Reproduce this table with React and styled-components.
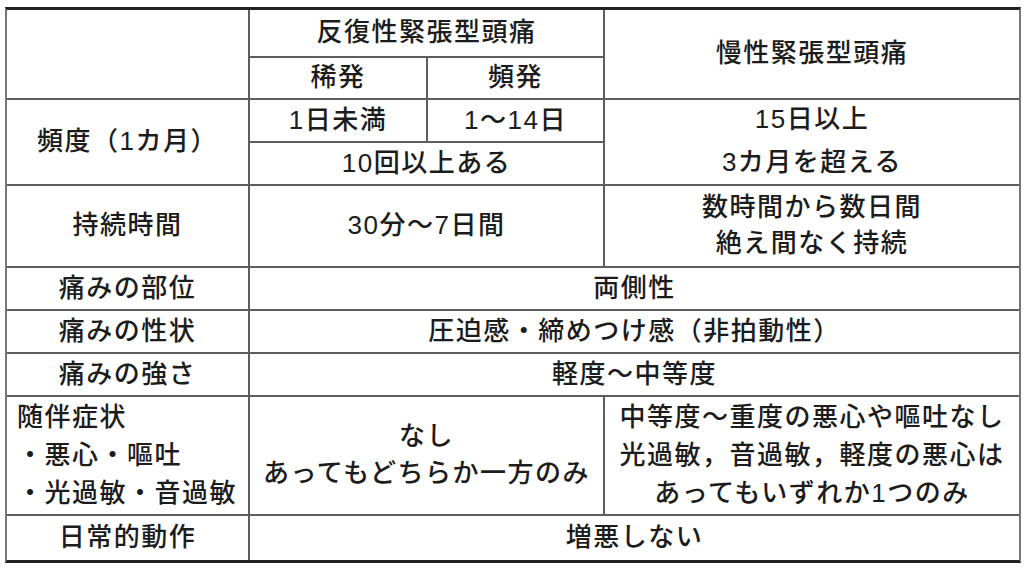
import React from "react";
import styled, { createGlobalStyle } from "styled-components";

const Global = createGlobalStyle`
  html, body { margin: 0; padding: 0; background: #ffffff; }
  body {
    font-family: "Liberation Sans", "Noto Sans CJK JP", sans-serif;
    color: #1c1c1c;
  }
`;

const Page = styled.div`
  padding: 7px 0 0 5px;
`;

const Table = styled.div`
  display: grid;
  width: 1016px;
  box-sizing: border-box;
  grid-template-columns: 241px 176px 175px 414px;
  grid-template-rows: 46px 40px 41px 41px 80px 41px 41px 41px 117px 44px;
  column-gap: 2px;
  row-gap: 2px;
  background: #5e5e5e;
  border-top: 3px solid #222;
  border-bottom: 3px solid #222;
  border-left: 2px solid #777;
  border-right: 2px solid #777;
`;

const Cell = styled.div`
  grid-column: ${(p) => p.$col};
  grid-row: ${(p) => p.$row};
  background: #ffffff;
  display: flex;
  flex-direction: column;
  justify-content: center;
  align-items: ${(p) => (p.$left ? "flex-start" : "center")};
  padding-left: ${(p) => (p.$left ? "10px" : "0")};
  padding-bottom: 2px;
  text-align: ${(p) => (p.$left ? "left" : "center")};
  font-size: 26px;
  font-weight: 500;
  letter-spacing: 1.5px;
  line-height: ${(p) => p.$lh || 36}px;
  white-space: nowrap;
`;

const Line = styled.span`
  display: block;
`;

export default function App() {
  return (
    <>
      <Global />
      <Page>
        <Table>
          <Cell $col="1" $row="1 / 3" />
          <Cell $col="2 / 4" $row="1">反復性緊張型頭痛</Cell>
          <Cell $col="4" $row="1 / 3">慢性緊張型頭痛</Cell>
          <Cell $col="2" $row="2">稀発</Cell>
          <Cell $col="3" $row="2">頻発</Cell>

          <Cell $col="1" $row="3 / 5">頻度（1カ月）</Cell>
          <Cell $col="2" $row="3">1日未満</Cell>
          <Cell $col="3" $row="3">1～14日</Cell>
          <Cell $col="2 / 4" $row="4">10回以上ある</Cell>
          <Cell $col="4" $row="3 / 5" $lh={43}>
            <Line>15日以上</Line>
            <Line>3カ月を超える</Line>
          </Cell>

          <Cell $col="1" $row="5">持続時間</Cell>
          <Cell $col="2 / 4" $row="5">30分～7日間</Cell>
          <Cell $col="4" $row="5">
            <Line>数時間から数日間</Line>
            <Line>絶え間なく持続</Line>
          </Cell>

          <Cell $col="1" $row="6">痛みの部位</Cell>
          <Cell $col="2 / 5" $row="6">両側性</Cell>

          <Cell $col="1" $row="7">痛みの性状</Cell>
          <Cell $col="2 / 5" $row="7">圧迫感・締めつけ感（非拍動性）</Cell>

          <Cell $col="1" $row="8">痛みの強さ</Cell>
          <Cell $col="2 / 5" $row="8">軽度～中等度</Cell>

          <Cell $col="1" $row="9" $left $lh={38}>
            <Line>随伴症状</Line>
            <Line>・悪心・嘔吐</Line>
            <Line>・光過敏・音過敏</Line>
          </Cell>
          <Cell $col="2 / 4" $row="9" $lh={37}>
            <Line>なし</Line>
            <Line>あってもどちらか一方のみ</Line>
          </Cell>
          <Cell $col="4" $row="9" $lh={38}>
            <Line>中等度～重度の悪心や嘔吐なし</Line>
            <Line>光過敏，音過敏，軽度の悪心は</Line>
            <Line>あってもいずれか1つのみ</Line>
          </Cell>

          <Cell $col="1" $row="10">日常的動作</Cell>
          <Cell $col="2 / 5" $row="10">増悪しない</Cell>
        </Table>
      </Page>
    </>
  );
}
